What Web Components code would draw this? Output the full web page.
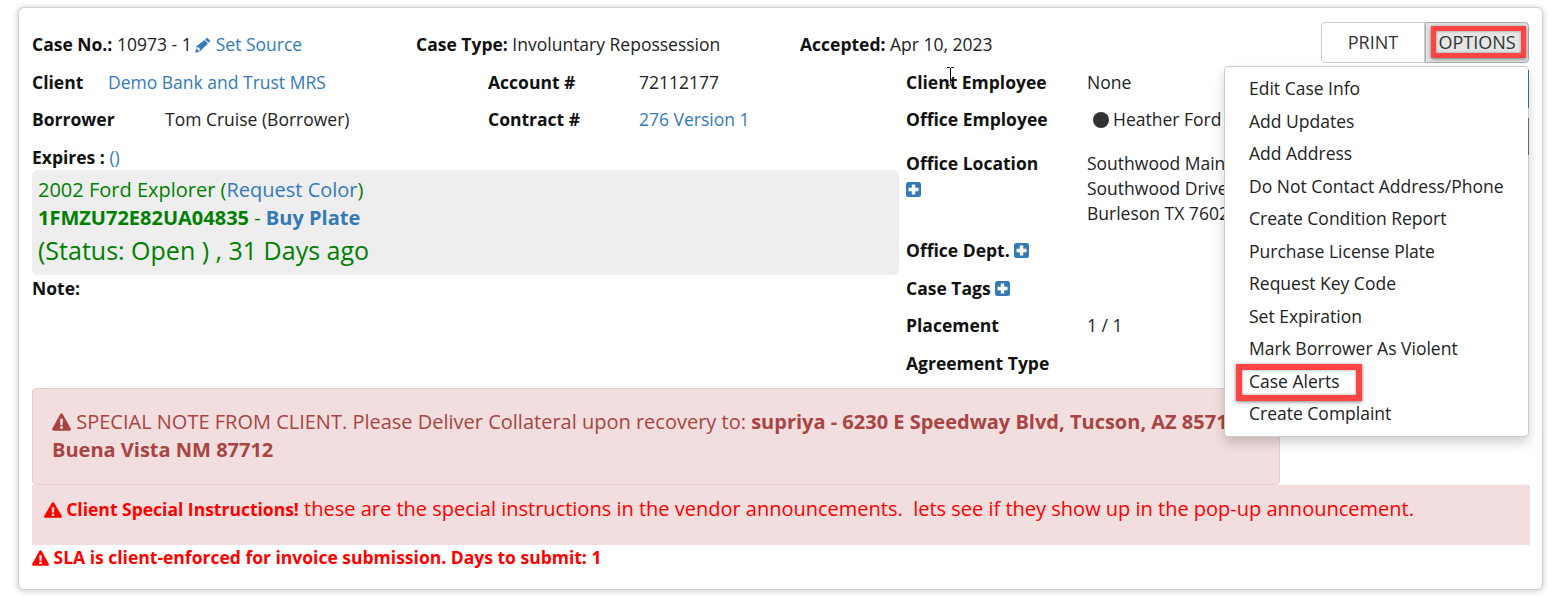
<!DOCTYPE html>
<html>
<head>
<meta charset="utf-8">
<title>Case</title>
<style>
  html, body { margin: 0; background: #fff; }
  body { font: 17.5px/22px "Open Sans", "Liberation Sans", sans-serif; color: #222; height: 596px; overflow: hidden; }
</style>
</head>
<body>
<case-card>
  <case-header slot="header"></case-header>
  <case-summary slot="left"></case-summary>
  <case-details slot="right"></case-details>
  <alert-box slot="alerts" kind="note">
    SPECIAL NOTE FROM CLIENT. Please Deliver Collateral upon recovery to: <b>supriya - 6230 E Speedway Blvd, Tucson, AZ 85711</b><br><b>Buena Vista NM 87712</b>
  </alert-box>
  <alert-box slot="alerts" kind="instructions">
    <b>Client Special Instructions!</b> these are the special instructions in the vendor announcements.&nbsp; lets see if they show up in the pop-up announcement.
  </alert-box>
  <alert-box slot="alerts" kind="sla">
    <b>SLA is client-enforced for invoice submission. Days to submit: 1</b>
  </alert-box>
  <options-menu slot="menu"></options-menu>
</case-card>

<script>
  /* small shared icons */
  const ICON_PENCIL = `<svg width="16" height="16" viewBox="0 0 16 16" style="vertical-align:-2px;margin-left:-1px"><path fill="#337ab7" d="M12 .6l3.400 3.400-1.800 1.800-3.400-3.400zM9.500 3.100l3.400 3.400-7.600 7.600-1.100-1.100.9-1.600-1.300-.2-.2-1.300-1.600.9-1.100-1.100zM1.200 11.200L.2 15.800l4.600-1z"/></svg>`;
  const ICON_WARN = (c, w, h) => `<svg width="${w}" height="${h}" viewBox="0 0 19 17" preserveAspectRatio="none" style="vertical-align:-2px"><path fill="${c}" fill-rule="evenodd" d="M9.500.3c.6 0 1 .3 1.300.8l7.900 13.600c.5 1-.2 2-1.300 2H1.600c-1.100 0-1.800-1-1.300-2L8.200 1.100c.3-.5.7-.8 1.300-.8zM8.100 5.500l.3 6h2.200l.3-6zM8.200 12.500v2.400h2.600v-2.400z"/></svg>`;
  const ICON_PLUS = `<svg width="15" height="15" viewBox="0 0 15 15" style="vertical-align:-1px"><rect width="15" height="15" rx="2.500" fill="#337ab7"/><path fill="#fff" d="M5.800 2.500h3.400v3.300h3.300v3.400H9.200v3.300H5.800V9.200H2.500V5.800h3.300z"/></svg>`;

  class CaseCard extends HTMLElement {
    connectedCallback() {
      if (this.shadowRoot) return;
      this.attachShadow({ mode: 'open' }).innerHTML = `
        <style>
          :host { display: block; padding: 7px 11px 0 18px; }
          .card {
            position: relative; box-sizing: border-box; height: 583px;
            padding: 14px 13px 0 13px;
            background: #fff; border: 1px solid #d0d0d0; border-radius: 6px;
            box-shadow: 0 1px 7px rgba(0,0,0,.22);
          }
          .body { display: flex; padding-top: 4px; height: 317px; }
          .left { width: 874px; flex: none; }
          .right { flex: 1; min-width: 0; }
        </style>
        <div class="card">
          <slot name="header"></slot>
          <div class="body">
            <div class="left"><slot name="left"></slot></div>
            <div class="right"><slot name="right"></slot></div>
          </div>
          <slot name="alerts"></slot>
          <slot name="menu"></slot>
        </div>`;
    }
  }
  customElements.define('case-card', CaseCard);

  class CaseHeader extends HTMLElement {
    connectedCallback() {
      if (this.shadowRoot) return;
      this.attachShadow({ mode: 'open' }).innerHTML = `
        <style>
          :host { display: flex; align-items: flex-start; height: 45px; }
          .f { width: 384px; flex: none; padding-top: 11px; line-height: 22px; white-space: nowrap; }
          b { font-weight: 700; color: #111; }
          a { color: #337ab7; text-decoration: none; }
          .btns { margin-left: auto; display: flex; }
          .btn {
            box-sizing: border-box; height: 41px; line-height: 39px; text-align: center; font-size: 18px;
            border: 1px solid #ccc; background: #fff; color: #333; border-radius: 4px 0 0 4px; width: 104px;
          }
          .btn.on { position: relative; background: #e6e6e6; border-color: #adadad; border-radius: 0 4px 4px 0; }
          .mark { position: absolute; left: 5px; top: 3px; right: 2px; bottom: 4px; border: 5px solid #ff4444; box-shadow: 0 1px 4px rgba(0,0,0,.5), inset 0 0 3px rgba(0,0,0,.4); pointer-events: none; }
        </style>
        <div class="f"><b>Case No.:</b> 10973 - 1 ${ICON_PENCIL} <a>Set Source</a></div>
        <div class="f"><b>Case Type:</b> Involuntary Repossession</div>
        <div class="f" style="width:auto"><b>Accepted:</b> Apr 10, 2023</div>
        <div class="btns">
          <div class="btn">PRINT</div>
          <div class="btn on">OPTIONS<span class="mark"></span></div>
        </div>`;
    }
  }
  customElements.define('case-header', CaseHeader);

  class CaseSummary extends HTMLElement {
    connectedCallback() {
      if (this.shadowRoot) return;
      this.attachShadow({ mode: 'open' }).innerHTML = `
        <style>
          :host { display: block; }
          b { color: #111; }
          a { color: #337ab7; text-decoration: none; }
          .row { display: flex; height: 37px; line-height: 22px; white-space: nowrap; }
          .c1 { width: 456px; flex: none; display: flex; }
          .c3 { width: 151px; flex: none; }
          .exp { margin-top: 1px; height: 24px; }
          .veh { box-sizing: border-box; width: 867px; height: 105px; padding: 6px 6px; background: #eee; border-radius: 6px; color: #008000; }
          .veh div { white-space: nowrap; }
          .l1 { font-size: 20px; line-height: 27px; }
          .l2 { font-size: 20px; line-height: 29px; font-weight: 700; }
          .l3 { font-size: 25px; line-height: 37px; }
          .note { margin-top: 2px; font-weight: 700; color: #111; }
        </style>
        <div class="row">
          <div class="c1"><b style="width:76px">Client</b><a>Demo Bank and Trust MRS</a></div>
          <b class="c3">Account #</b><span>72112177</span>
        </div>
        <div class="row">
          <div class="c1"><b style="width:133px">Borrower</b><span>Tom Cruise (Borrower)</span></div>
          <b class="c3">Contract #</b><a>276 Version 1</a>
        </div>
        <div class="exp"><b>Expires :</b> <a>()</a></div>
        <div class="veh">
          <div class="l1">2002 Ford Explorer (<a>Request Color</a>)</div>
          <div class="l2">1FMZU72E82UA04835 <span style="font-weight:400">-</span> <a>Buy Plate</a></div>
          <div class="l3">(Status: Open ) , 31 Days ago</div>
        </div>
        <div class="note">Note:</div>`;
    }
  }
  customElements.define('case-summary', CaseSummary);

  class CaseDetails extends HTMLElement {
    connectedCallback() {
      if (this.shadowRoot) return;
      this.attachShadow({ mode: 'open' }).innerHTML = `
        <style>
          :host { display: block; position: relative; }
          .row { display: flex; line-height: 22px; white-space: nowrap; height: 37.5px; }
          .k { width: 181px; flex: none; font-weight: 700; color: #111; }
          .addr { line-height: 25px; margin-top: -1.5px; }
          .plus { margin-top: 4px; }
          .dot { display: inline-block; width: 16px; height: 16px; border-radius: 50%; background: #333; vertical-align: -2px; margin: 0 4px 0 6px; }
          .cursor { position: absolute; left: 40px; top: -4px; }
        </style>
        <div class="row" style="height:37px"><div class="k">Client Employee</div><div>None</div></div>
        <div class="row" style="height:44px"><div class="k">Office Employee</div><div><span class="dot"></span>Heather Ford</div></div>
        <div class="row" style="height:87px"><div class="k">Office Location<div class="plus">${ICON_PLUS}</div></div><div class="addr">Southwood Main<br>Southwood Drive<br>Burleson TX 76028</div></div>
        <div class="row"><div class="k">Office Dept. ${ICON_PLUS}</div></div>
        <div class="row"><div class="k">Case Tags ${ICON_PLUS}</div></div>
        <div class="row"><div class="k">Placement</div><div>1 / 1</div></div>
        <div class="row"><div class="k">Agreement Type</div></div>
        <svg class="cursor" width="9" height="19" viewBox="0 0 9 19"><path fill="none" stroke="#000" stroke-width="1" d="M1 .5h2.500l1 1 1-1H8M4.500 1.500v15M1 18.500h2.500l1-1 1 1H8"/></svg>`;
    }
  }
  customElements.define('case-details', CaseDetails);

  class AlertBox extends HTMLElement {
    connectedCallback() {
      if (this.shadowRoot) return;
      const kind = this.getAttribute('kind');
      const icon = kind === 'note' ? ICON_WARN('#a94442', 19, 18) : kind === 'instructions' ? ICON_WARN('#f00', 18, 16) : ICON_WARN('#f00', 17, 16);
      this.attachShadow({ mode: 'open' }).innerHTML = `
        <style>
          :host { display: block; }
          .note { box-sizing: border-box; width: 1248px; height: 97px; padding: 19px 19px; font-size: 20px; line-height: 28px; color: #a94442; background: #f2dede; border: 1px solid #ebccd1; border-radius: 4px; white-space: nowrap; }
          .instructions { box-sizing: border-box; height: 60px; margin-right: -1px; padding: 10px 12px; font-size: 20px; line-height: 28px; color: #f00; background: #f2dede; white-space: nowrap; }
          .instructions svg { margin-right: -1px; }
          .instructions ::slotted(b) { font-size: 17.5px; }
          .sla { line-height: 24px; color: #f00; }
        </style>
        <div class="${kind}">${icon} <slot></slot></div>`;
    }
  }
  customElements.define('alert-box', AlertBox);

  class OptionsMenu extends HTMLElement {
    connectedCallback() {
      if (this.shadowRoot) return;
      const items = ['Edit Case Info','Add Updates','Add Address','Do Not Contact Address/Phone','Create Condition Report','Purchase License Plate','Request Key Code','Set Expiration','Mark Borrower As Violent','Case Alerts','Create Complaint'];
      this.attachShadow({ mode: 'open' }).innerHTML = `
        <style>
          :host { position: absolute; left: 1205px; top: 58px; width: 305px; box-sizing: border-box; display: block; padding: 5px 0 6px; background: #fff; border: 1px solid #ccc; border-radius: 4px; box-shadow: 0 6px 12px rgba(0,0,0,.175); }
          .i { height: 32.5px; line-height: 32.5px; padding-left: 24px; color: #222; white-space: nowrap; position: relative; }
          .mark { position: absolute; left: 11px; top: -1px; width: 126px; height: 37px; box-sizing: border-box; border: 6px solid #ff4444; box-shadow: 0 1px 4px rgba(0,0,0,.5), inset 0 0 3px rgba(0,0,0,.4); }
          .edge { position: absolute; right: -1px; width: 1px; }
        </style>
        ${items.map(t => `<div class="i">${t}${t === 'Case Alerts' ? '<span class="mark"></span>' : ''}</div>`).join('')}
        <span class="edge" style="top:3px;height:38px;background:#2e6da4"></span>
        <span class="edge" style="top:51px;height:37px;background:#666"></span>`;
    }
  }
  customElements.define('options-menu', OptionsMenu);
</script>
</body>
</html>
